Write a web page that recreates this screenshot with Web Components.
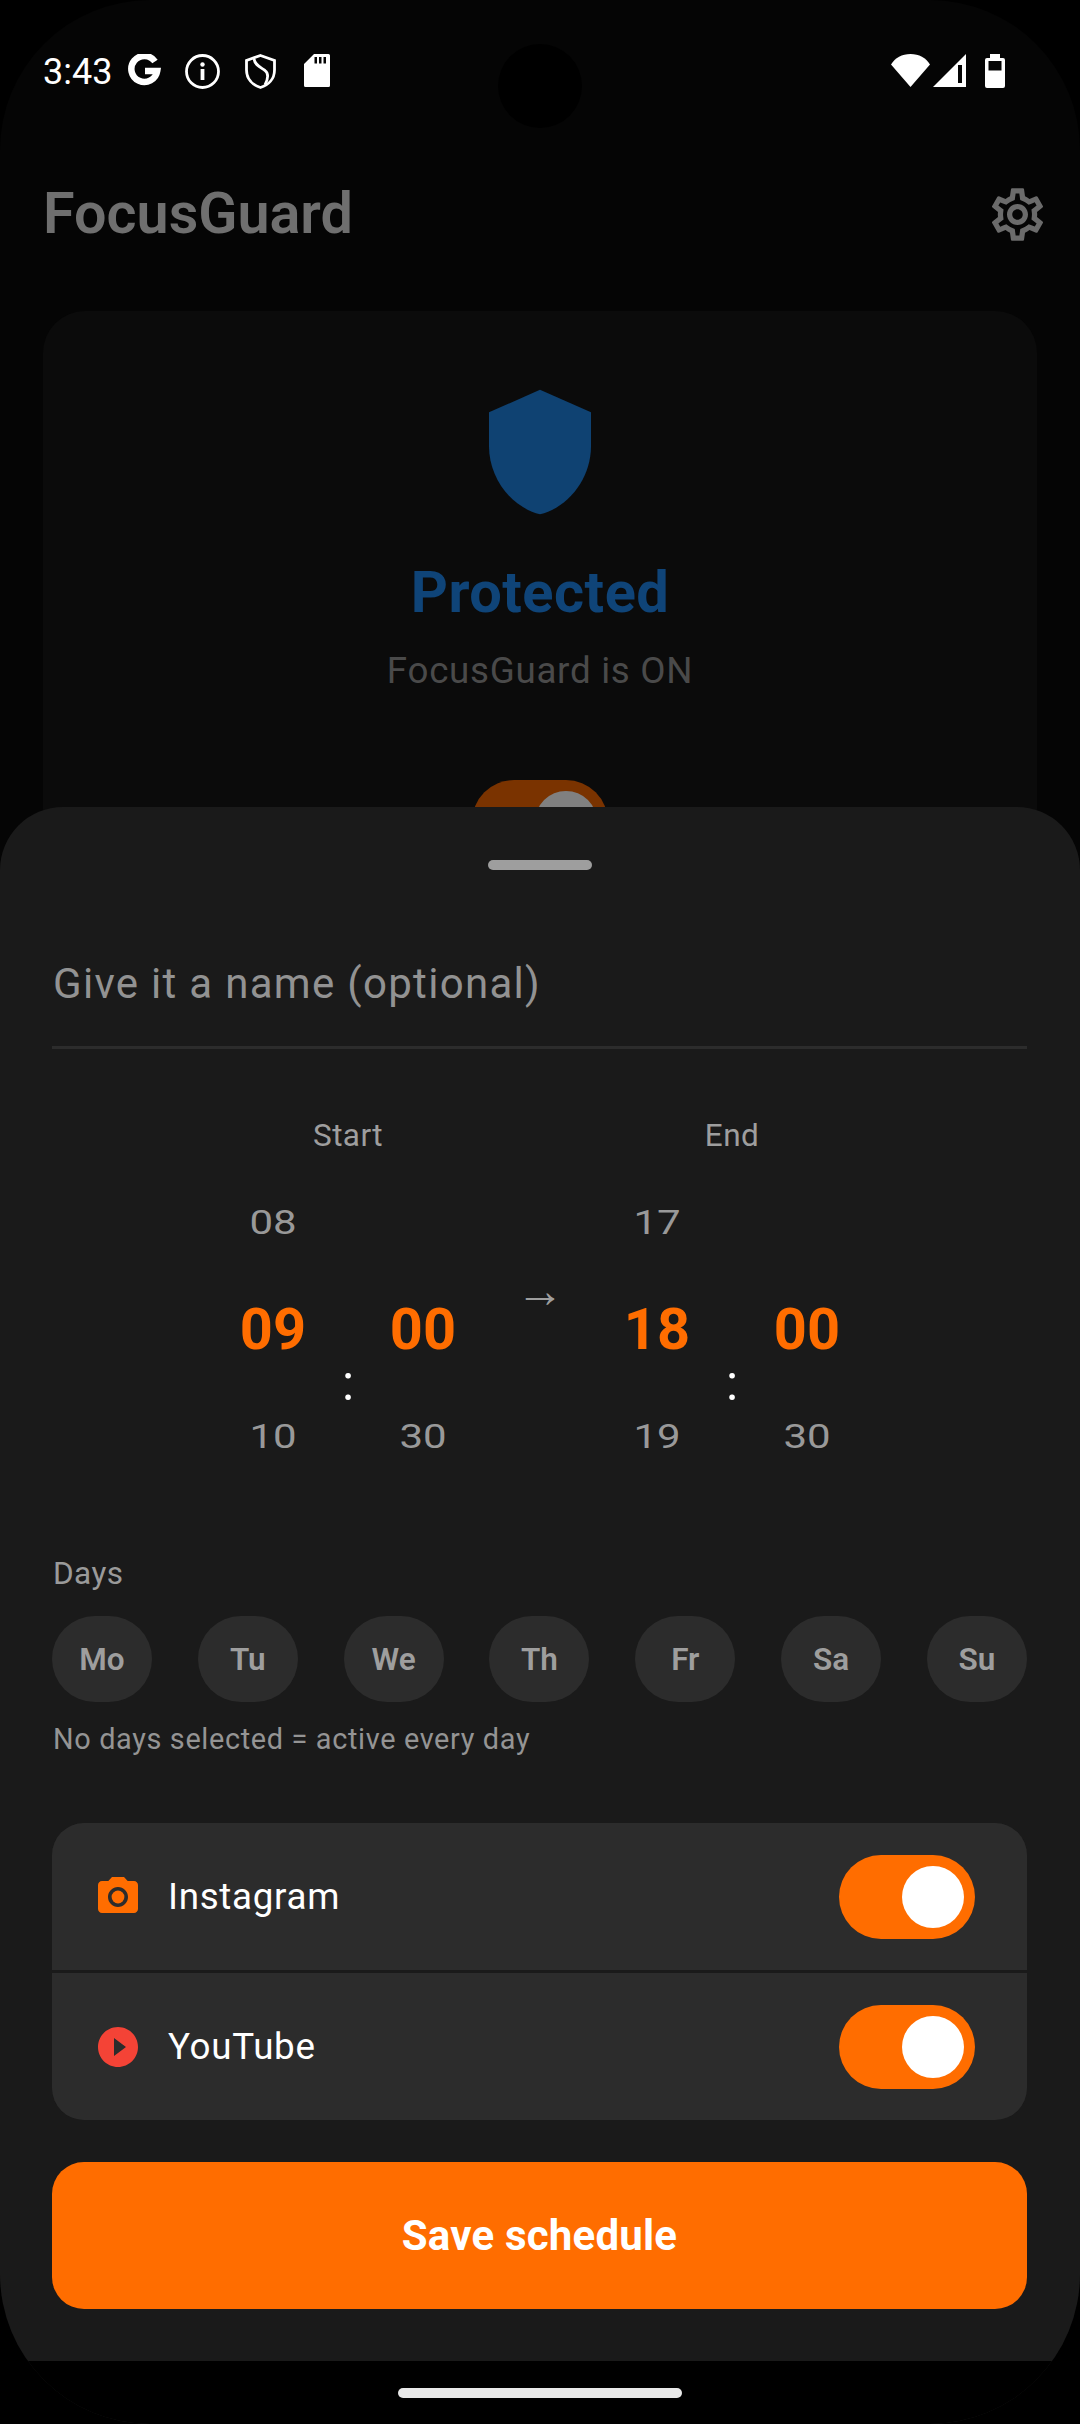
<!DOCTYPE html>
<html>
<head>
<meta charset="utf-8">
<title>FocusGuard</title>
<style>
  html, body { margin: 0; background: #000; }
  body { width: 1080px; height: 2424px; overflow: hidden; font-family: Roboto, "Noto Sans", sans-serif; }
</style>
</head>
<body>
<phone-screen>
  <status-bar time="3:43"></status-bar>
  <app-header title="FocusGuard"></app-header>
  <guard-card></guard-card>
  <schedule-sheet>
    <name-field placeholder="Give it a name (optional)"></name-field>
    <time-picker>
      <time-wheel label="Start" h0="08" h1="09" h2="10" m1="00" m2="30"></time-wheel>
      <span slot="arrow">→</span>
      <time-wheel slot="end" label="End" h0="17" h1="18" h2="19" m1="00" m2="30"></time-wheel>
    </time-picker>
    <day-picker></day-picker>
    <app-list>
      <app-row name="Instagram">
        <svg slot="icon" viewBox="0 0 24 24" width="48" height="48" fill="#ff6d00"><circle cx="12" cy="12" r="3.2"/><path d="M9 2L7.17 4H4c-1.1 0-2 .9-2 2v12c0 1.1.9 2 2 2h16c1.1 0 2-.9 2-2V6c0-1.1-.9-2-2-2h-3.17L15 2H9zm3 15c-2.76 0-5-2.24-5-5s2.24-5 5-5 5 2.24 5 5-2.24 5-5 5z"/></svg>
      </app-row>
      <app-row name="YouTube">
        <svg slot="icon" viewBox="0 0 24 24" width="48" height="48" fill="#f44336"><path d="M12 2C6.48 2 2 6.48 2 12s4.48 10 10 10 10-4.48 10-10S17.52 2 12 2zm-2 14.5v-9l6 4.5-6 4.5z"/></svg>
      </app-row>
    </app-list>
    <save-button>Save schedule</save-button>
  </schedule-sheet>
  <nav-bar></nav-bar>
</phone-screen>

<script>
class PhoneScreen extends HTMLElement {
  constructor() {
    super();
    this.attachShadow({ mode: "open" });
    this.shadowRoot.innerHTML = `
      <style>
        :host {
          display: block;
          position: relative;
          width: 1080px;
          height: 2424px;
          background: #050505;
          border-radius: 150px;
          overflow: hidden;
        }
        .cutout {
          position: absolute;
          left: 498px;
          top: 44px;
          width: 84px;
          height: 84px;
          border-radius: 50%;
          background: #000;
        }
      </style>
      <slot></slot>
      <div class="cutout"></div>
    `;
  }
}

class StatusBar extends HTMLElement {
  constructor() {
    super();
    this.attachShadow({ mode: "open" });
  }
  connectedCallback() {
    this.shadowRoot.innerHTML = `
      <style>
        :host {
          display: flex;
          align-items: flex-start;
          box-sizing: border-box;
          height: 100px;
          padding: 54px 75px 0 43px;
          color: #fff;
        }
        .time { font-size: 36px; line-height: 36px; width: 85px; }
        svg { display: block; flex: none; }
        .spacer { flex: 1; }
      </style>
      <span class="time">${this.getAttribute("time")}</span>
      <svg width="33" height="33" viewBox="0 0 33 33" fill="none" stroke="#fff" stroke-width="6.5"><path d="M27 7.5A13 13 0 1 0 29.2 17H17"/></svg>
      <svg style="margin-left:24px" width="35" height="35" viewBox="0 0 35 35" fill="#fff"><circle cx="17.5" cy="17.5" r="16" fill="none" stroke="#fff" stroke-width="2.8"/><rect x="15.6" y="15" width="3.8" height="11"/><circle cx="17.5" cy="10.5" r="2.2"/></svg>
      <svg style="margin-left:25px" width="31" height="35" viewBox="0 0 31 35" fill="none" stroke="#fff" stroke-width="2.8"><path d="M15.5 1.5 29.5 6.5V16C29.5 25 23.5 31 15.5 33.5 7.5 31 1.5 25 1.5 16V6.5Z"/><path d="M9 5C10 11 15 13 20 16.5 24 19.5 23 25 20 31"/></svg>
      <svg style="margin-left:28px" width="26" height="33" viewBox="0 0 26 33"><path fill="#fff" fill-rule="evenodd" d="M10 0H24.5Q26 0 26 1.5V31.5Q26 33 24.5 33H1.5Q0 33 0 31.5V10ZM10.5 3V9.5H13V3ZM15 3V9.5H17.5V3ZM19.5 3V9.5H22V3Z"/></svg>
      <span class="spacer"></span>
      <svg width="39" height="33" viewBox="0 0 39 33"><path fill="#fff" d="M19.5 33 0 10.5C4 4 11 0 19.5 0S35 4 39 10.5Z"/></svg>
      <svg style="margin-left:3px" width="33" height="33" viewBox="0 0 33 33"><path fill="#fff" fill-rule="evenodd" d="M33 0V33H0ZM25 11V29H29V11Z"/></svg>
      <svg style="margin-left:19px" width="20" height="34" viewBox="0 0 20 34"><path fill="#fff" fill-rule="evenodd" d="M5 0H15V4H18Q20 4 20 6V32Q20 34 18 34H2Q0 34 0 32V6Q0 4 2 4H5ZM3.5 7V16.5H16.5V7Z"/></svg>
    `;
  }
}

class AppHeader extends HTMLElement {
  constructor() {
    super();
    this.attachShadow({ mode: "open" });
  }
  connectedCallback() {
    this.shadowRoot.innerHTML = `
      <style>
        :host {
          display: flex;
          align-items: center;
          justify-content: space-between;
          box-sizing: border-box;
          height: 211px;
          padding: 17px 31px 0 43px;
        }
        h1 { margin: 0; font-size: 57.5px; font-weight: 600; color: #6f6f6f; line-height: 66px; }
      </style>
      <h1>${this.getAttribute("title")}</h1>
      <svg width="63" height="63" viewBox="0 0 24 24" fill="#6b6b6b"><path d="M19.43 12.98c.04-.32.07-.64.07-.98 0-.34-.03-.66-.07-.98l2.11-1.65c.19-.15.24-.42.12-.64l-2-3.46c-.09-.16-.26-.25-.44-.25-.06 0-.12.01-.17.03l-2.49 1c-.52-.4-1.08-.73-1.69-.98l-.38-2.65C14.46 2.18 14.25 2 14 2h-4c-.25 0-.46.18-.49.42l-.38 2.65c-.61.25-1.17.59-1.69.98l-2.49-1c-.06-.02-.12-.03-.18-.03-.17 0-.34.09-.43.25l-2 3.46c-.13.22-.07.49.12.64l2.11 1.65c-.04.32-.07.65-.07.98 0 .33.03.66.07.98l-2.11 1.65c-.19.15-.24.42-.12.64l2 3.46c.09.16.26.25.44.25.06 0 .12-.01.17-.03l2.49-1c.52.4 1.08.73 1.69.98l.38 2.65c.03.24.24.42.49.42h4c.25 0 .46-.18.49-.42l.38-2.65c.61-.25 1.17-.59 1.69-.98l2.49 1c.06.02.12.03.18.03.17 0 .34-.09.43-.25l2-3.46c.12-.22.07-.49-.12-.64l-2.11-1.65zm-1.98-1.71c.04.31.05.52.05.73 0 .21-.02.43-.05.73l-.14 1.13.89.7 1.08.84-.7 1.21-1.27-.51-1.04-.42-.9.68c-.43.32-.84.56-1.25.73l-1.06.43-.16 1.13-.2 1.35h-1.4l-.19-1.35-.16-1.13-1.06-.43c-.43-.18-.83-.41-1.23-.71l-.91-.7-1.06.43-1.27.51-.7-1.21 1.08-.84.89-.7-.14-1.13c-.03-.31-.05-.54-.05-.74s.02-.43.05-.73l.14-1.13-.89-.7-1.08-.84.7-1.21 1.27.51 1.04.42.9-.68c.43-.32.84-.56 1.25-.73l1.06-.43.16-1.13.2-1.35h1.39l.19 1.35.16 1.13 1.06.43c.43.18.83.41 1.23.71l.91.7 1.06-.43 1.27-.51.7 1.21-1.07.85-.89.7.14 1.13zM12 8c-2.21 0-4 1.79-4 4s1.79 4 4 4 4-1.79 4-4-1.79-4-4-4zm0 6c-1.1 0-2-.9-2-2s.9-2 2-2 2 .9 2 2-.9 2-2 2z"/></svg>
    `;
  }
}

class GuardCard extends HTMLElement {
  constructor() {
    super();
    this.attachShadow({ mode: "open" });
    this.shadowRoot.innerHTML = `
      <style>
        :host {
          display: flex;
          flex-direction: column;
          align-items: center;
          box-sizing: border-box;
          margin: 0 43px;
          height: 700px;
          padding-top: 73px;
          background: #0b0b0b;
          border-radius: 42px;
        }
        svg { display: block; }
        .state { margin-top: 39px; font-size: 57.75px; line-height: 66px; letter-spacing: .5px; font-weight: 700; color: #0f4478; }
        .sub { margin-top: 25px; font-size: 36.75px; line-height: 42px; letter-spacing: .7px; color: #4a4a4a; }
        .switch { box-sizing: border-box; margin-top: 88px; width: 136px; height: 84px; border-radius: 42px; background: #7a3300; padding: 11px 11px 11px 63px; }
        .knob { width: 62px; height: 62px; border-radius: 50%; background: #808080; }
      </style>
      <svg width="136" height="136" viewBox="0 0 24 24" fill="#0f4272"><path d="M12 1L3 5v6c0 5.55 3.84 10.74 9 12 5.16-1.26 9-6.45 9-12V5l-9-4z"/></svg>
      <div class="state">Protected</div>
      <div class="sub">FocusGuard is ON</div>
      <div class="switch"><div class="knob"></div></div>
    `;
  }
}

class ScheduleSheet extends HTMLElement {
  constructor() {
    super();
    this.attachShadow({ mode: "open" });
    this.shadowRoot.innerHTML = `
      <style>
        :host {
          display: flex;
          flex-direction: column;
          position: absolute;
          left: 0;
          right: 0;
          top: 807px;
          bottom: 0;
          box-sizing: border-box;
          padding: 53px 53px 0 52px;
          background: #1a1a1a;
          border-radius: 63px 63px 0 0;
        }
        .handle { align-self: center; flex: none; width: 104px; height: 10px; border-radius: 5px; background: #9e9e9e; margin-bottom: 69px; }
      </style>
      <div class="handle"></div>
      <slot></slot>
    `;
  }
}

class NameField extends HTMLElement {
  constructor() {
    super();
    this.attachShadow({ mode: "open" });
  }
  connectedCallback() {
    this.shadowRoot.innerHTML = `
      <style>
        :host {
          display: block;
          box-sizing: border-box;
          height: 110px;
          border-bottom: 3px solid #2c2c2c;
        }
        span { display: block; font-size: 42px; line-height: 48px; letter-spacing: 1.3px; color: #929292; padding: 21px 0 0 1px; }
      </style>
      <span>${this.getAttribute("placeholder")}</span>
    `;
  }
}

class TimePicker extends HTMLElement {
  constructor() {
    super();
    this.attachShadow({ mode: "open" });
    this.shadowRoot.innerHTML = `
      <style>
        :host {
          display: flex;
          justify-content: center;
          margin: 69px -53px 0 -52px;
          height: 372px;
        }
        ::slotted(span) { display: block; width: 104px; text-align: center; padding-top: 149px; font-size: 48px; line-height: 48px; color: #9e9e9e; font-family: "Liberation Sans", sans-serif; }
      </style>
      <slot></slot><slot name="arrow"></slot><slot name="end"></slot>
    `;
  }
}

class TimeWheel extends HTMLElement {
  constructor() {
    super();
    this.attachShadow({ mode: "open" });
  }
  connectedCallback() {
    const a = (n) => this.getAttribute(n);
    this.shadowRoot.innerHTML = `
      <style>
        :host { display: block; width: 280px; }
        .label { text-align: center; font-size: 31.5px; line-height: 36px; letter-spacing: .4px; color: #9e9e9e; margin-bottom: 15px; }
        .cols { display: flex; }
        .col { width: 130px; }
        .item { height: 107px; display: flex; align-items: center; justify-content: center; }
        .dim { font-size: 42px; color: #999; transform: scaleY(.77); }
        .sel { font-size: 57.75px; font-weight: 700; color: #ff6d00; margin-bottom: 2px; }
        .colon { width: 20px; align-self: flex-end; text-align: center; font-size: 50px; line-height: 60px; color: #fff; margin-bottom: 77px; }
      </style>
      <div class="label">${a("label")}</div>
      <div class="cols">
        <div class="col">
          <div class="item"><span class="dim">${a("h0")}</span></div>
          <div class="item"><span class="sel">${a("h1")}</span></div>
          <div class="item"><span class="dim">${a("h2")}</span></div>
        </div>
        <span class="colon">:</span>
        <div class="col">
          <div class="item"></div>
          <div class="item"><span class="sel">${a("m1")}</span></div>
          <div class="item"><span class="dim">${a("m2")}</span></div>
        </div>
      </div>
    `;
  }
}

class DayPicker extends HTMLElement {
  constructor() {
    super();
    this.attachShadow({ mode: "open" });
    const days = ["Mo", "Tu", "We", "Th", "Fr", "Sa", "Su"];
    this.shadowRoot.innerHTML = `
      <style>
        :host { display: block; margin-top: 66px; }
        .label { font-size: 31.5px; line-height: 36px; letter-spacing: .4px; color: #9a9a9a; padding-left: 1px; }
        .hint { font-size: 28.875px; line-height: 36px; letter-spacing: .65px; color: #949494; padding-left: 1px; }
        .days { display: flex; justify-content: space-between; margin: 24px 0 19px; }
        .day { width: 100px; height: 86px; border-radius: 43px; background: #2c2c2c; display: flex; align-items: center; justify-content: center; font-size: 31.5px; font-weight: 600; color: #9e9e9e; }
      </style>
      <div class="label">Days</div>
      <div class="days">${days.map((d) => `<div class="day">${d}</div>`).join("")}</div>
      <div class="hint">No days selected = active every day</div>
    `;
  }
}

class AppList extends HTMLElement {
  constructor() {
    super();
    this.attachShadow({ mode: "open" });
    this.shadowRoot.innerHTML = `
      <style>
        :host {
          display: flex;
          flex-direction: column;
          gap: 3px;
          margin-top: 66px;
          height: 297px;
          background: #1a1a1a;
          border-radius: 32px;
          overflow: hidden;
        }
      </style>
      <slot></slot>
    `;
  }
}

class AppRow extends HTMLElement {
  constructor() {
    super();
    this.attachShadow({ mode: "open" });
  }
  connectedCallback() {
    this.shadowRoot.innerHTML = `
      <style>
        :host {
          display: flex;
          align-items: center;
          box-sizing: border-box;
          height: 147px;
          padding: 0 52px 0 42px;
          background: #2c2c2c;
        }
        .icon { width: 48px; height: 48px; margin-right: 26px; }
        ::slotted(svg) { display: block; }
        .name { flex: 1; font-size: 36.75px; letter-spacing: .7px; color: #fff; }
        .switch { box-sizing: border-box; width: 136px; height: 84px; border-radius: 42px; background: #ff6d00; padding: 11px 11px 11px 63px; }
        .knob { width: 62px; height: 62px; border-radius: 50%; background: #fff; }
      </style>
      <div class="icon"><slot name="icon"></slot></div>
      <span class="name">${this.getAttribute("name")}</span>
      <div class="switch"><div class="knob"></div></div>
    `;
  }
}

class SaveButton extends HTMLElement {
  constructor() {
    super();
    this.attachShadow({ mode: "open" });
    this.shadowRoot.innerHTML = `
      <style>
        :host {
          display: flex;
          align-items: center;
          justify-content: center;
          flex: none;
          margin-top: 42px;
          height: 147px;
          border-radius: 32px;
          background: #ff6d00;
          color: #fff;
          font-size: 42px;
          letter-spacing: .2px;
          font-weight: 700;
        }
      </style>
      <slot></slot>
    `;
  }
}

class NavBar extends HTMLElement {
  constructor() {
    super();
    this.attachShadow({ mode: "open" });
    this.shadowRoot.innerHTML = `
      <style>
        :host {
          display: flex;
          justify-content: center;
          position: absolute;
          left: 0;
          right: 0;
          bottom: 0;
          height: 63px;
          padding-top: 27px;
          box-sizing: border-box;
          background: #000;
        }
        div { width: 284px; height: 10px; border-radius: 5px; background: #e8e8e8; }
      </style>
      <div></div>
    `;
  }
}

customElements.define("phone-screen", PhoneScreen);
customElements.define("status-bar", StatusBar);
customElements.define("app-header", AppHeader);
customElements.define("guard-card", GuardCard);
customElements.define("schedule-sheet", ScheduleSheet);
customElements.define("name-field", NameField);
customElements.define("time-picker", TimePicker);
customElements.define("time-wheel", TimeWheel);
customElements.define("day-picker", DayPicker);
customElements.define("app-list", AppList);
customElements.define("app-row", AppRow);
customElements.define("save-button", SaveButton);
customElements.define("nav-bar", NavBar);
</script>
</body>
</html>
